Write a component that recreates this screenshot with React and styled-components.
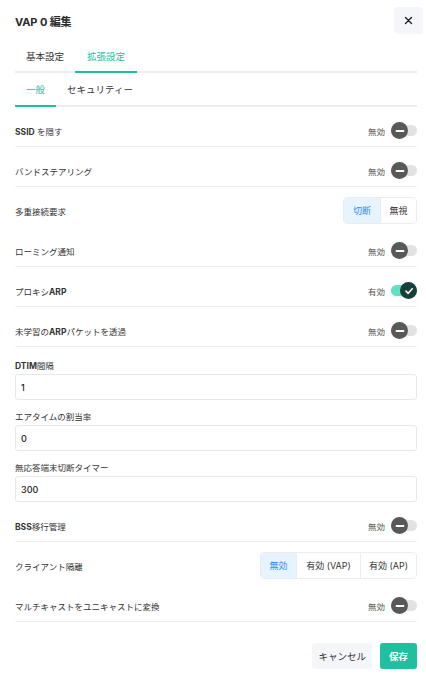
import React, { useState } from "react";
import styled, { createGlobalStyle } from "styled-components";

const GlobalStyle = createGlobalStyle`
  body {
    margin: 0;
    background: #ffffff;
    font-family: Inter, "Noto Sans CJK JP", sans-serif;
    color: #2b2b2b;
  }
  * { box-sizing: border-box; }
`;

const Page = styled.div`
  width: 426px;
  padding: 7px 9px 10px 15px;
`;

const Header = styled.div`
  display: flex;
  align-items: center;
  justify-content: space-between;
  height: 27px;
`;

const Title = styled.div`
  font-size: 11px;
  font-weight: 700;
  letter-spacing: -0.1px;
`;

const CloseButton = styled.button`
  width: 29px;
  height: 27px;
  margin-right: -6px;
  border: none;
  border-radius: 4px;
  background: #f5f6f9;
  display: flex;
  align-items: center;
  justify-content: center;
  padding: 0;
`;

const TabBar = styled.div`
  display: flex;
  border-bottom: 2px solid #eeeeee;
  margin-top: ${(p) => p.$top || 0}px;
`;

const Tab = styled.div`
  font-size: 9.5px;
  height: ${(p) => p.$h}px;
  display: flex;
  align-items: center;
  padding: 0 ${(p) => p.$pad}px;
  margin-bottom: -2px;
  color: ${(p) => (p.$active ? "#1fbf9f" : "#333333")};
  border-bottom: 2px solid ${(p) => (p.$active ? "#1fbf9f" : "transparent")};
`;

const Row = styled.div`
  display: flex;
  align-items: center;
  justify-content: space-between;
  height: 40px;
  padding-top: 10px;
  padding-bottom: 2px;
  border-bottom: 1px solid ${(p) => (p.$plain ? "transparent" : "#f0f0f0")};
`;

const Label = styled.div`
  font-size: 8.5px;
  color: #333333;
`;

const Bold = styled.span`
  font-weight: 700;
`;

const ToggleWrap = styled.div`
  display: flex;
  align-items: center;
  gap: 6px;
`;

const ToggleText = styled.span`
  font-size: 8.5px;
  color: #555555;
`;

const Track = styled.div`
  position: relative;
  width: 26px;
  height: 11px;
  border-radius: 6px;
  background: ${(p) => (p.$on ? "#5fe3c3" : "#e2e2e2")};
`;

const Thumb = styled.div`
  position: absolute;
  top: -3px;
  left: ${(p) => (p.$on ? "9px" : "0")};
  width: 17px;
  height: 17px;
  border-radius: 50%;
  background: ${(p) => (p.$on ? "#173f3b" : "#585858")};
  display: flex;
  align-items: center;
  justify-content: center;
`;

const Segmented = styled.div`
  display: flex;
  height: 27px;
  border: 1px solid #ececec;
  border-radius: 4px;
  overflow: hidden;
`;

const Segment = styled.div`
  display: flex;
  align-items: center;
  justify-content: center;
  width: ${(p) => p.$w}px;
  font-size: 9px;
  background: ${(p) => (p.$active ? "#e7f3ff" : "#ffffff")};
  color: ${(p) => (p.$active ? "#2f8ef0" : "#333333")};
  & + & {
    border-left: 1px solid #ececec;
  }
`;

const Field = styled.div`
  display: flex;
  flex-direction: column;
  gap: 3px;
  margin-top: ${(p) => p.$top}px;
`;

const Input = styled.div`
  height: 26px;
  border: 1px solid #e6e8ec;
  border-radius: 3px;
  padding: 0 5px;
  display: flex;
  align-items: center;
  font-size: 9px;
  font-weight: 500;
  color: #222222;
`;

const Footer = styled.div`
  display: flex;
  justify-content: flex-end;
  gap: 8px;
  margin-top: 21px;
`;

const Button = styled.button`
  height: 26px;
  padding: 0 ${(p) => p.$pad}px;
  border: none;
  border-radius: 3px;
  font-family: inherit;
  font-size: 9.5px;
  font-weight: ${(p) => (p.$primary ? 700 : 400)};
  background: ${(p) => (p.$primary ? "#1fbf9f" : "#f5f6f9")};
  color: ${(p) => (p.$primary ? "#ffffff" : "#333333")};
`;

function Toggle({ on }) {
  return (
    <ToggleWrap>
      <ToggleText>{on ? "有効" : "無効"}</ToggleText>
      <Track $on={on}>
        <Thumb $on={on}>
          {on ? (
            <svg width="10" height="10" viewBox="0 0 10 10">
              <path d="M2 5.2 L4.2 7.3 L8.2 2.8" fill="none" stroke="#fff" strokeWidth="1.6" strokeLinecap="round" strokeLinejoin="round" />
            </svg>
          ) : (
            <svg width="10" height="10" viewBox="0 0 10 10">
              <path d="M1.5 5 H8.5" stroke="#fff" strokeWidth="1.8" strokeLinecap="round" />
            </svg>
          )}
        </Thumb>
      </Track>
    </ToggleWrap>
  );
}

function SegmentGroup({ items, active }) {
  return (
    <Segmented>
      {items.map(([text, w]) => (
        <Segment key={text} $w={w} $active={text === active}>
          {text}
        </Segment>
      ))}
    </Segmented>
  );
}

export default function App() {
  const [tab] = useState("adv");

  return (
    <Page>
      <GlobalStyle />
      <Header>
        <Title>VAP 0 編集</Title>
        <CloseButton>
          <svg width="9" height="9" viewBox="0 0 9 9">
            <path d="M1.5 1.5 L7.5 7.5 M7.5 1.5 L1.5 7.5" stroke="#222" strokeWidth="1.4" strokeLinecap="round" />
          </svg>
        </CloseButton>
      </Header>

      <TabBar $top={6}>
        <Tab $h={33} $pad={11}>基本設定</Tab>
        <Tab $h={33} $pad={12} $active={tab === "adv"}>拡張設定</Tab>
      </TabBar>

      <TabBar>
        <Tab $h={34} $pad={11} $active>一般</Tab>
        <Tab $h={34} $pad={11}>セキュリティー</Tab>
      </TabBar>

      <Row>
        <Label><Bold>SSID</Bold> を隠す</Label>
        <Toggle />
      </Row>
      <Row>
        <Label>バンドステアリング</Label>
        <Toggle />
      </Row>
      <Row $plain>
        <Label>多重接続要求</Label>
        <SegmentGroup items={[["切断", 36], ["無視", 36]]} active="切断" />
      </Row>
      <Row>
        <Label>ローミング通知</Label>
        <Toggle />
      </Row>
      <Row>
        <Label>プロキシ<Bold>ARP</Bold></Label>
        <Toggle on />
      </Row>
      <Row>
        <Label>未学習の<Bold>ARP</Bold>パケットを透過</Label>
        <Toggle />
      </Row>

      <Field $top={12}>
        <Label><Bold>DTIM</Bold>間隔</Label>
        <Input>1</Input>
      </Field>
      <Field $top={10}>
        <Label>エアタイムの割当率</Label>
        <Input>0</Input>
      </Field>
      <Field $top={10}>
        <Label>無応答端末切断タイマー</Label>
        <Input>300</Input>
      </Field>

      <Row>
        <Label><Bold>BSS</Bold>移行管理</Label>
        <Toggle />
      </Row>
      <Row $plain>
        <Label>クライアント隔離</Label>
        <SegmentGroup
          items={[["無効", 35], ["有効 (VAP)", 64], ["有効 (AP)", 56]]}
          active="無効"
        />
      </Row>
      <Row>
        <Label>マルチキャストをユニキャストに変換</Label>
        <Toggle />
      </Row>

      <Footer>
        <Button $pad={6}>キャンセル</Button>
        <Button $pad={9} $primary>保存</Button>
      </Footer>
    </Page>
  );
}
